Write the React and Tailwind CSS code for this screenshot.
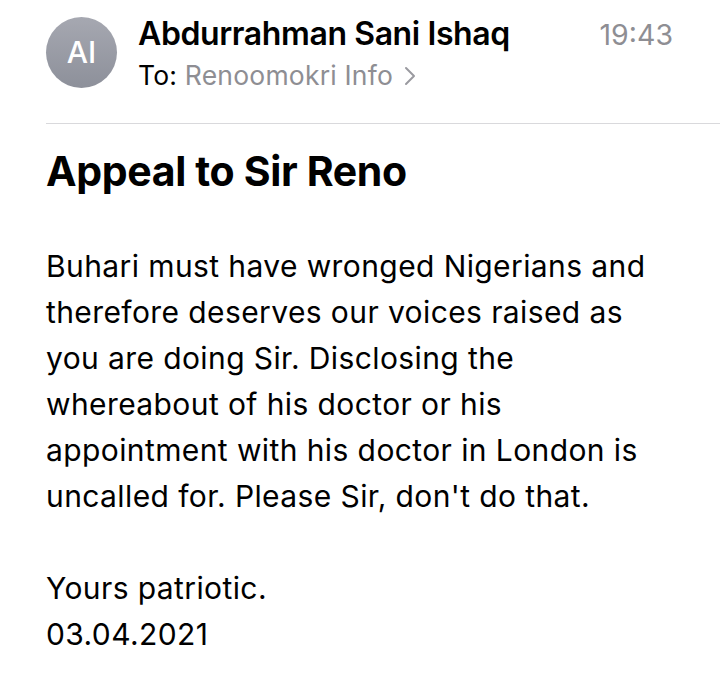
import React from 'react';

const BODY = [
    'Buhari must have wronged Nigerians and',
    'therefore deserves our voices raised as',
    'you are doing Sir. Disclosing the',
    'whereabout of his doctor or his',
    'appointment with his doctor in London is',
    'uncalled for. Please Sir, don\'t do that.',
];

const App = () => {
    return (
        <div className="w-[720px] h-[686px] bg-white overflow-hidden text-black" style={{ fontFamily: 'Inter, "Noto Sans", sans-serif' }}>
            {/* Header */}
            <div className="flex pl-[46px] pt-[16px]">
                <div className="mt-px w-[71px] h-[71px] rounded-full bg-gradient-to-b from-[#a6a8b1] to-[#8d909a] flex items-center justify-center text-white text-[30px] font-medium shrink-0">
                    AI
                </div>
                <div className="flex-1 pl-[21px] pr-[47px]">
                    <div className="flex justify-between items-baseline">
                        <div className="text-[32px] font-semibold leading-[36px] tracking-[-0.4px]">Abdurrahman Sani Ishaq</div>
                        <div className="text-[28.5px] text-[#8e8e93] leading-[36px]">19:43</div>
                    </div>
                    <div className="mt-[6px] flex items-center text-[26.5px] leading-[32px] tracking-[0.2px]">
                        <span>To:&nbsp;</span>
                        <span className="text-[#8e8e93]">Renoomokri Info</span>
                        <svg className="ml-[11px] mt-[2px]" width="12" height="20" viewBox="0 0 12 20" fill="none">
                            <path d="M2 2 L10 10 L2 18" stroke="#9a9aa0" strokeWidth="2" strokeLinecap="round" strokeLinejoin="round" />
                        </svg>
                    </div>
                </div>
            </div>

            <div className="ml-[46px] mt-[32px] h-px bg-[#d9d9dc]" />

            {/* Subject */}
            <h1 className="pl-[46px] mt-[23px] text-[41px] font-bold leading-[48px] tracking-[-0.35px]">
                Appeal to Sir Reno
            </h1>

            {/* Body */}
            <div className="pl-[46px] mt-[48px] text-[30px] leading-[46px] tracking-[0.4px]">
                {BODY.map((line, i) => (
                    <div key={i}>{line}</div>
                ))}
                <div className="h-[46px]" />
                <div>Yours patriotic.</div>
                <div>03.04.2021</div>
            </div>
        </div>
    );
};

export default App;
